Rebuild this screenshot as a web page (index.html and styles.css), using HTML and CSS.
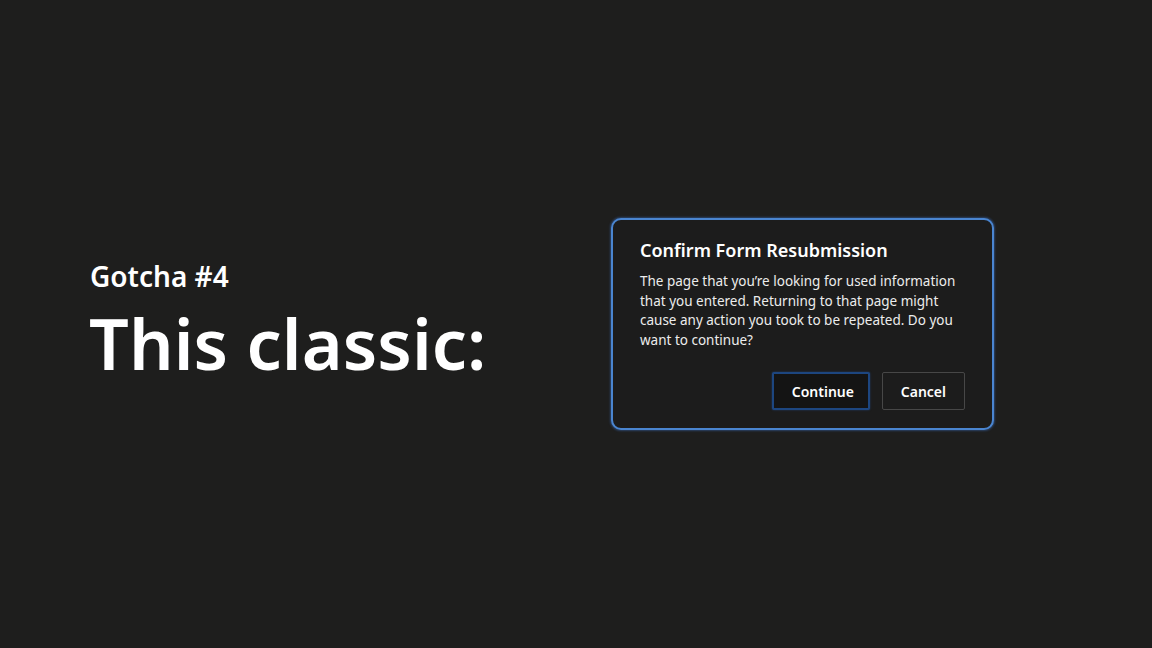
FILE: index.html
```html
<!DOCTYPE html>
<html lang="en">
<head>
<meta charset="utf-8">
<link rel="stylesheet" href="styles.css">
</head>
<body>
<main class="slide">
  <section class="intro">
    <h2 class="kicker">Gotcha #4</h2>
    <h1 class="headline">This classic:</h1>
  </section>
  <div class="dialog">
    <h3 class="dialog-title">Confirm Form Resubmission</h3>
    <p class="dialog-body">The page that you’re looking for used information that you entered. Returning to that page might cause any action you took to be repeated. Do you want to continue?</p>
    <div class="dialog-actions">
      <button class="btn btn-primary">Continue</button>
      <button class="btn">Cancel</button>
    </div>
  </div>
</main>
</body>
</html>
```
FILE: styles.css
```css
html, body {
  margin: 0;
  height: 100%;
  background: #1e1e1d;
}
body {
  font-family: "Noto Sans", "Open Sans", sans-serif;
  color: #ffffff;
}
.slide {
  height: 648px;
  box-sizing: border-box;
  padding: 0 158px 0 90px;
  display: flex;
  align-items: center;
  justify-content: space-between;
}
.intro {
  margin-top: -6px;
}
.kicker {
  margin: 0;
  font-size: 28px;
  font-weight: 600;
  line-height: 34px;
}
.headline {
  margin: 10px 0 0 -1px;
  font-size: 70px;
  font-weight: 600;
  line-height: 80px;
  letter-spacing: 0.1px;
}
.dialog {
  width: 383px;
  height: 212px;
  box-sizing: border-box;
  border: 2px solid #4a85d0;
  border-radius: 10px;
  background: #1c1c1c;
  box-shadow: 0 0 2px 1px rgba(60, 110, 190, 0.45);
  padding: 18px 27px 18px 27px;
  display: flex;
  flex-direction: column;
}
.dialog-title {
  margin: 0;
  font-size: 18px;
  font-weight: 600;
  line-height: 24px;
}
.dialog-body {
  margin: 10px 0 0;
  font-size: 13.5px;
  line-height: 19.7px;
  color: #ececec;
}
.dialog-actions {
  margin-top: auto;
  display: flex;
  justify-content: flex-end;
  gap: 12px;
}
.btn {
  height: 38px;
  padding: 0 18px;
  box-sizing: border-box;
  background: #1c1c1c;
  color: #ffffff;
  border: 1px solid #474747;
  border-radius: 2px;
  font-family: inherit;
  font-size: 14px;
  font-weight: 600;
}
.btn-primary {
  width: 98px;
  border: 2px solid #1d4680;
  background: #141414;
  box-shadow: 0 0 2px rgba(40, 90, 170, 0.6);
}
```
